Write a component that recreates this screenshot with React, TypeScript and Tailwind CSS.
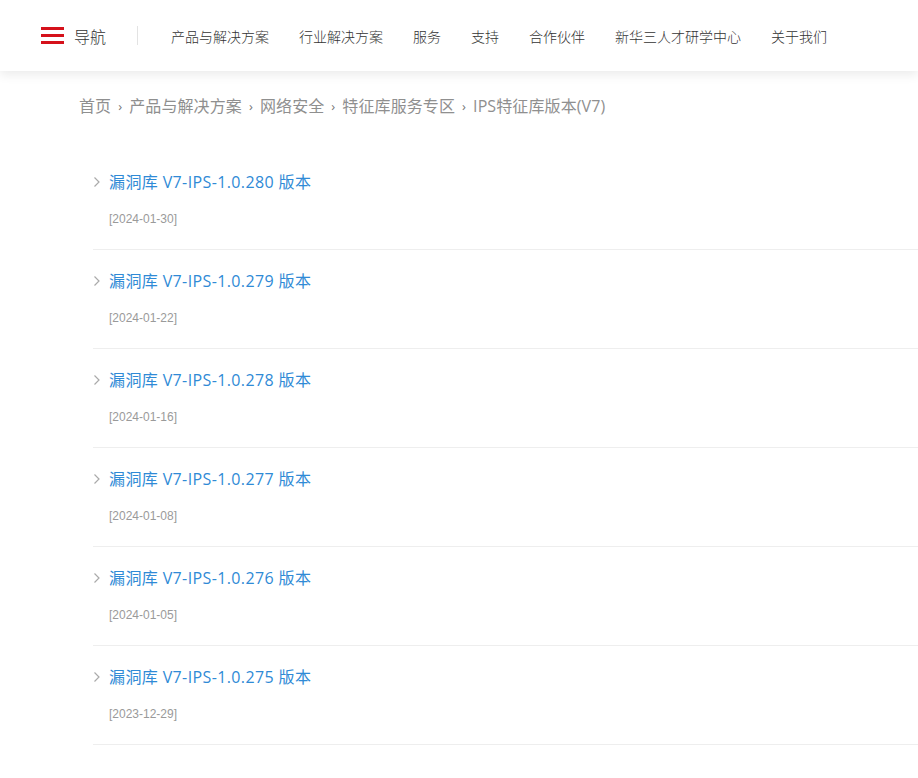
import React from "react";

const nav = ["产品与解决方案", "行业解决方案", "服务", "支持", "合作伙伴", "新华三人才研学中心", "关于我们"];
const crumbs = ["首页", "产品与解决方案", "网络安全", "特征库服务专区", "IPS特征库版本(V7)"];
const items = [
  ["漏洞库 V7-IPS-1.0.280 版本", "[2024-01-30]"],
  ["漏洞库 V7-IPS-1.0.279 版本", "[2024-01-22]"],
  ["漏洞库 V7-IPS-1.0.278 版本", "[2024-01-16]"],
  ["漏洞库 V7-IPS-1.0.277 版本", "[2024-01-08]"],
  ["漏洞库 V7-IPS-1.0.276 版本", "[2024-01-05]"],
  ["漏洞库 V7-IPS-1.0.275 版本", "[2023-12-29]"],
];

const font = { fontFamily: '"Noto Sans CJK SC", "Liberation Sans", sans-serif' };
const latinFirst = { fontFamily: '"Open Sans", "Noto Sans CJK SC", sans-serif' };

export default function App() {
  return (
    <div className="min-h-[778px] bg-white" style={font}>
      <header className="relative z-10 h-[71px] bg-white shadow-[0_4px_10px_rgba(0,0,0,0.08)] flex items-center pl-[41px]">
        <div className="flex flex-col gap-[4px] w-[23px]">
          <span className="block h-[3px] bg-[#d5111b]" />
          <span className="block h-[3px] bg-[#d5111b]" />
          <span className="block h-[3px] bg-[#d5111b]" />
        </div>
        <span className="ml-[10px] text-[16px] text-[#333] font-light leading-none">导航</span>
        <span className="ml-[31px] h-[19px] w-px bg-[#e3e3e3]" />
        <nav className="ml-[33px] flex gap-[30px] text-[14px] text-[#333] font-light leading-none">
          {nav.map((n) => (
            <span key={n}>{n}</span>
          ))}
        </nav>
      </header>
      <div className="pl-[79px] pt-[25px] flex items-center text-[16px] text-[#8f8f8f] leading-[20px] tracking-[0.1px]" style={latinFirst}>
        {crumbs.map((c, i) => (
          <React.Fragment key={c}>
            {i > 0 && <span className="mx-[7px] text-[13px] text-[#777]">›</span>}
            <span>{c}</span>
          </React.Fragment>
        ))}
      </div>
      <ul className="mt-[35px] ml-[93px]">
        {items.map(([t, d]) => (
          <li key={t} className="border-b border-[#eeeeee] h-[99px] pt-[21px]">
            <div className="flex items-center h-[20px]">
              <svg width="8" height="12" viewBox="0 0 8 12" className="mr-[8px]">
                <path d="M1.5 1.5 L6 6 L1.5 10.5" fill="none" stroke="#aaa" strokeWidth="1.2" />
              </svg>
              <span className="text-[16px] text-[#2f8ad6] leading-none tracking-[0.38px]" style={latinFirst}>{t}</span>
            </div>
            <div
              className="mt-[21px] ml-[16px] text-[12px] text-[#9a9a9a] leading-none"
              style={{ fontFamily: '"Liberation Sans", Arial, sans-serif' }}
            >
              {d}
            </div>
          </li>
        ))}
      </ul>
    </div>
  );
}
